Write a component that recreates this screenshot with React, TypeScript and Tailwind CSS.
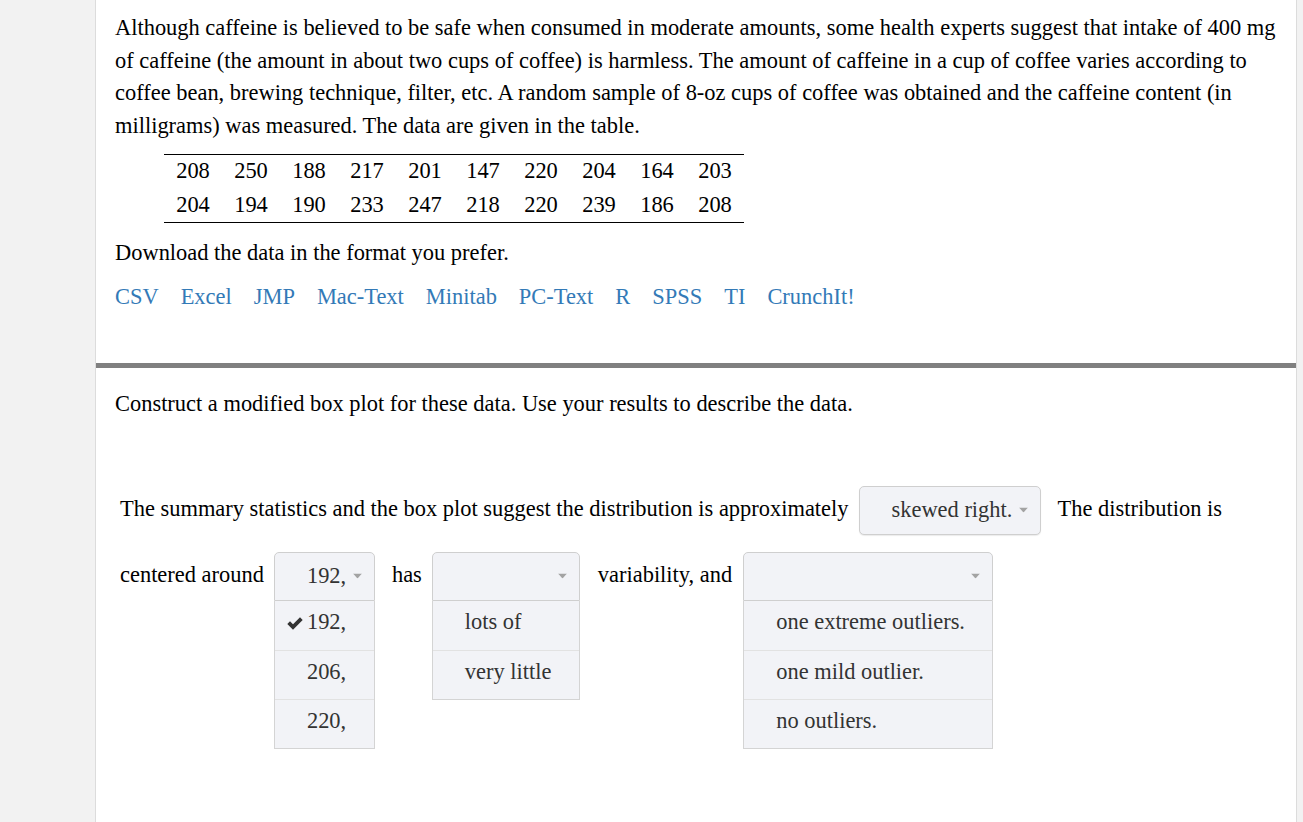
import { useState } from 'react'

const serif = { fontFamily: '"Liberation Serif", "Times New Roman", serif' }

const rows = [
  [208, 250, 188, 217, 201, 147, 220, 204, 164, 203],
  [204, 194, 190, 233, 247, 218, 220, 239, 186, 208],
]

const formats = ['CSV', 'Excel', 'JMP', 'Mac-Text', 'Minitab', 'PC-Text', 'R', 'SPSS', 'TI', 'CrunchIt!']

function Caret() {
  return (
    <svg width="9" height="5" viewBox="0 0 9 5" className="absolute right-[12px] top-1/2 -translate-y-1/2">
      <path d="M0 0 L9 0 L4.5 5 Z" fill="#a3a3a3" />
    </svg>
  )
}

function Check() {
  return (
    <svg width="16" height="13" viewBox="0 0 16 13" className="absolute left-[12px] top-1/2 -translate-y-[8px]">
      <path d="M0.3 7 L3 4.3 L6 7.3 L13 0.3 L15.7 3 L6 12.7 Z" fill="#333" />
    </svg>
  )
}

interface DropdownProps {
  width: string
  value?: string
  options?: string[]
  open?: boolean
}

function Dropdown({ width, value, options = [], open = false }: DropdownProps) {
  return (
    <div className={`relative ${width}`}>
      <div
        className={`relative h-[49px] bg-[#f2f3f7] border border-[#cfcfcf] pl-[32px] flex items-center text-[#333] ${
          open ? 'rounded-t-[5px]' : 'rounded-[5px] shadow-[0_1px_1px_rgba(0,0,0,0.08)]'
        }`}
      >
        <span>{value}</span>
        <Caret />
      </div>
      {open && (
        <div className="absolute left-0 top-full w-full bg-[#f2f3f7] border-x border-b border-[#d4d4d4]">
          {options.map((o, i) => (
            <div
              key={o}
              className={`relative h-[49px] pl-[32px] flex items-center text-[#333] ${
                i > 0 ? 'border-t border-[#e2e2e2]' : ''
              }`}
            >
              {o === value && <Check />}
              <span className="-translate-y-[3px]">{o}</span>
            </div>
          ))}
        </div>
      )}
    </div>
  )
}

export default function App() {
  const [fmt] = useState(formats)

  return (
    <div className="min-h-[822px] bg-[#f2f2f2] text-black text-[22.45px] leading-[32.7px]" style={serif}>
      <div className="ml-[95px] w-[1202px] min-h-[822px] bg-white border-x border-[#dcdcdc]">
        <div className="pl-[19px] pr-[18px] pt-[12px] pb-[50px]">
          <p>
            Although caffeine is believed to be safe when consumed in moderate amounts, some health experts suggest that
            intake of 400 mg of caffeine (the amount in about two cups of coffee) is harmless. The amount of caffeine in a
            cup of coffee varies according to coffee bean, brewing technique, filter, etc. A random sample of 8-oz cups of
            coffee was obtained and the caffeine content (in milligrams) was measured. The data are given in the table.
          </p>
          <table className="mt-[11px] ml-[49px] border-t border-b border-black border-collapse">
            <tbody>
              {rows.map((r, i) => (
                <tr key={i} className="h-[34px]">
                  {r.map((n, j) => (
                    <td key={j} className="w-[58px] text-center align-middle">
                      {n}
                    </td>
                  ))}
                </tr>
              ))}
            </tbody>
          </table>
          <p className="mt-[14px]">Download the data in the format you prefer.</p>
          <div className="mt-[11px] flex gap-[22px]">
            {fmt.map((f) => (
              <a key={f} href="#" className="text-[#337ab7] visited:text-[#337ab7]">
                {f}
              </a>
            ))}
          </div>
        </div>

        <div className="h-[5px] bg-[#808080]" />

        <div className="pl-[19px] pt-[20px]">
          <p>Construct a modified box plot for these data. Use your results to describe the data.</p>

          <div className="mt-[65px] pl-[5px] flex flex-col gap-[17px]">
            <div className="flex items-center h-[49px]">
              <span className="-translate-y-[1px]">
                The summary statistics and the box plot suggest the distribution is approximately
              </span>
              <div className="ml-[10px]">
                <Dropdown width="w-[182px]" value="skewed right." />
              </div>
              <span className="ml-[17px] -translate-y-[1px]">The distribution is</span>
            </div>

            <div className="flex items-center h-[49px]">
              <span className="-translate-y-[1px]">centered around</span>
              <div className="ml-[10px]">
                <Dropdown width="w-[101px]" value="192," options={['192,', '206,', '220,']} open />
              </div>
              <span className="ml-[17px] -translate-y-[1px]">has</span>
              <div className="ml-[10px]">
                <Dropdown width="w-[148px]" options={['lots of', 'very little']} open />
              </div>
              <span className="ml-[18px] -translate-y-[1px]">variability, and</span>
              <div className="ml-[11px]">
                <Dropdown
                  width="w-[250px]"
                  options={['one extreme outliers.', 'one mild outlier.', 'no outliers.']}
                  open
                />
              </div>
            </div>
          </div>
        </div>
      </div>
    </div>
  )
}
